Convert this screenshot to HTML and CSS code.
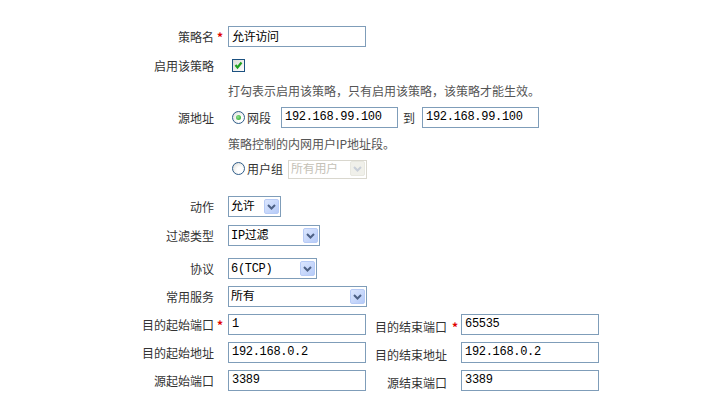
FILE: index.html
```html
<!DOCTYPE html>
<html lang="zh-CN">
<head>
  <meta charset="UTF-8" />
  <title>策略设置</title>
  <link rel="stylesheet" href="styles.css">
</head>
<body>
  <form class="policy">
    <div class="row">
      <span class="lbl">策略名</span><span class="req">*</span>
      <input class="txt w138" type="text" value="允许访问" />
    </div>
    <div class="row mt7">
      <span class="lbl">启用该策略</span><span class="req"></span>
      <span class="check"><svg width="11" height="11" viewBox="0 0 11 11"><polyline points="2.5,5 4.5,7.5 8.5,2.5" fill="none" stroke="#21a121" stroke-width="2.2"/></svg></span>
    </div>
    <div class="row mt3">
      <span class="lbl"></span><span class="req"></span>
      <span class="hint">打勾表示启用该策略，只有启用该策略，该策略才能生效。</span>
    </div>
    <div class="row mt5">
      <span class="lbl">源地址</span><span class="req"></span>
      <span class="radio on"></span><span class="opt">网段</span>
      <input class="txt w117 ip-from" type="text" value="192.168.99.100" />
      <span class="to">到</span>
      <input class="txt w117" type="text" value="192.168.99.100" />
    </div>
    <div class="row mt4">
      <span class="lbl"></span><span class="req"></span>
      <span class="hint">策略控制的内网用户IP地址段。</span>
    </div>
    <div class="row mt3">
      <span class="lbl"></span><span class="req"></span>
      <span class="radio"></span><span class="opt">用户组</span>
      <span class="sel w79 off">
        <select disabled><option>所有用户</option></select>
        <span class="arrow"><svg width="15" height="15" viewBox="0 0 15 15"><polyline points="4,6 7.5,9.5 11,6" fill="none" stroke="#c9cfd8" stroke-width="2"/></svg></span>
      </span>
    </div>
    <div class="row mt16">
      <span class="lbl">动作</span><span class="req"></span>
      <span class="sel w53">
        <select><option>允许</option></select>
        <span class="arrow"><svg width="15" height="15" viewBox="0 0 15 15"><polyline points="4,6 7.5,9.5 11,6" fill="none" stroke="#4d6185" stroke-width="2"/></svg></span>
      </span>
    </div>
    <div class="row mt7">
      <span class="lbl">过滤类型</span><span class="req"></span>
      <span class="sel w92">
        <select><option>IP过滤</option></select>
        <span class="arrow"><svg width="15" height="15" viewBox="0 0 15 15"><polyline points="4,6 7.5,9.5 11,6" fill="none" stroke="#4d6185" stroke-width="2"/></svg></span>
      </span>
    </div>
    <div class="row mt11">
      <span class="lbl">协议</span><span class="req"></span>
      <span class="sel w89">
        <select><option>6(TCP)</option></select>
        <span class="arrow"><svg width="15" height="15" viewBox="0 0 15 15"><polyline points="4,6 7.5,9.5 11,6" fill="none" stroke="#4d6185" stroke-width="2"/></svg></span>
      </span>
    </div>
    <div class="row">
      <span class="lbl">常用服务</span><span class="req"></span>
      <span class="sel w139">
        <select><option>所有</option></select>
        <span class="arrow"><svg width="15" height="15" viewBox="0 0 15 15"><polyline points="4,6 7.5,9.5 11,6" fill="none" stroke="#4d6185" stroke-width="2"/></svg></span>
      </span>
    </div>
    <div class="row">
      <span class="lbl">目的起始端口</span><span class="req">*</span>
      <input class="txt w138" type="text" value="1" />
      <span class="rlbl">目的结束端口</span><span class="req rreq">*</span>
      <input class="txt w138" type="text" value="65535" />
    </div>
    <div class="row">
      <span class="lbl">目的起始地址</span><span class="req"></span>
      <input class="txt w138" type="text" value="192.168.0.2" />
      <span class="rlbl">目的结束地址</span><span class="req rreq"></span>
      <input class="txt w138" type="text" value="192.168.0.2" />
    </div>
    <div class="row">
      <span class="lbl">源起始端口</span><span class="req"></span>
      <input class="txt w138" type="text" value="3389" />
      <span class="rlbl">源结束端口</span><span class="req rreq"></span>
      <input class="txt w138" type="text" value="3389" />
    </div>
  </form>
</body>
</html>
```

FILE: styles.css
```css
body {
  margin: 0;
  background-color: #fff;
  color: #333;
  font-family: "Noto Sans CJK SC", sans-serif;
  font-size: 12px;
}
.policy {
  padding: 25px 0 0 130px;
}
.row {
  display: flex;
  align-items: center;
  height: 22px;
  margin-top: 6px;
  white-space: nowrap;
}
.row:first-child { margin-top: 0; }
.mt3 { margin-top: 3px; }
.mt4 { margin-top: 4px; }
.mt5 { margin-top: 5px; }
.mt7 { margin-top: 7px; }
.mt11 { margin-top: 11px; }
.mt16 { margin-top: 16px; }
.lbl {
  width: 84px;
  text-align: right;
}
.req {
  width: 14px;
  padding-left: 3px;
  box-sizing: border-box;
  color: #e00000;
  font-weight: bold;
}
.rlbl {
  width: 81px;
  text-align: right;
  padding-top: 5px;
}
.rreq {
  padding-left: 5px;
  padding-top: 5px;
}
.hint {
  color: #555;
}
.txt {
  height: 21px;
  box-sizing: border-box;
  margin: 0;
  padding: 0 3px;
  border: 1px solid #7f9db9;
  background: #fff;
  color: #000;
  font-family: "Liberation Mono", "Noto Sans CJK SC", monospace;
  font-size: 12px;
  letter-spacing: -0.3px;
  outline: none;
}
.w138 { width: 138px; }
.w117 { width: 117px; }
.ip-from { margin-left: 10px; }
.to {
  margin: 0 7px 0 5px;
}
.opt {
  margin-left: 2px;
}
.check {
  width: 13px;
  height: 13px;
  box-sizing: border-box;
  margin-left: 4px;
  border: 1px solid #1c5180;
  background: linear-gradient(135deg, #dcdcd7, #fff);
  display: flex;
  align-items: center;
  justify-content: center;
}
.radio {
  width: 13px;
  height: 13px;
  box-sizing: border-box;
  margin-left: 4px;
  border: 1px solid #2f5d8a;
  border-radius: 50%;
  background: radial-gradient(circle at 65% 65%, #fff 30%, #d8d8d2 100%);
  display: flex;
  align-items: center;
  justify-content: center;
}
.radio.on::after {
  content: "";
  width: 5px;
  height: 5px;
  border-radius: 50%;
  background: radial-gradient(circle at 40% 40%, #8fe08f, #21a121);
}
.sel {
  position: relative;
  display: inline-block;
  height: 21px;
}
.sel select {
  width: 100%;
  height: 100%;
  box-sizing: border-box;
  margin: 0;
  padding: 0 18px 0 2px;
  border: 1px solid #7f9db9;
  border-radius: 0;
  background: #fff;
  color: #000;
  font-family: "Liberation Mono", "Noto Sans CJK SC", monospace;
  font-size: 12px;
  letter-spacing: -0.3px;
  appearance: none;
  -webkit-appearance: none;
  outline: none;
}
.sel .arrow {
  position: absolute;
  top: 3px;
  right: 2px;
  width: 15px;
  height: 15px;
  box-sizing: border-box;
  border: 1px solid #b7cbf6;
  border-radius: 2px;
  background: linear-gradient(135deg, #dbe6fe, #b6cbf8);
}
.sel .arrow svg {
  display: block;
  margin: -1px;
}
.w53 { width: 53px; }
.w92 { width: 92px; }
.w89 { width: 89px; }
.w139 { width: 139px; }
.w79 { width: 79px; margin-left: 5px; height: 19px; }
.sel.off select {
  border-color: #c9c7ba;
  color: #aca899;
  background: #fff;
}
.sel.off .arrow {
  top: 2px;
  height: 15px;
  border-color: #e8e8e0;
  background: #f0f0ea;
}
```
